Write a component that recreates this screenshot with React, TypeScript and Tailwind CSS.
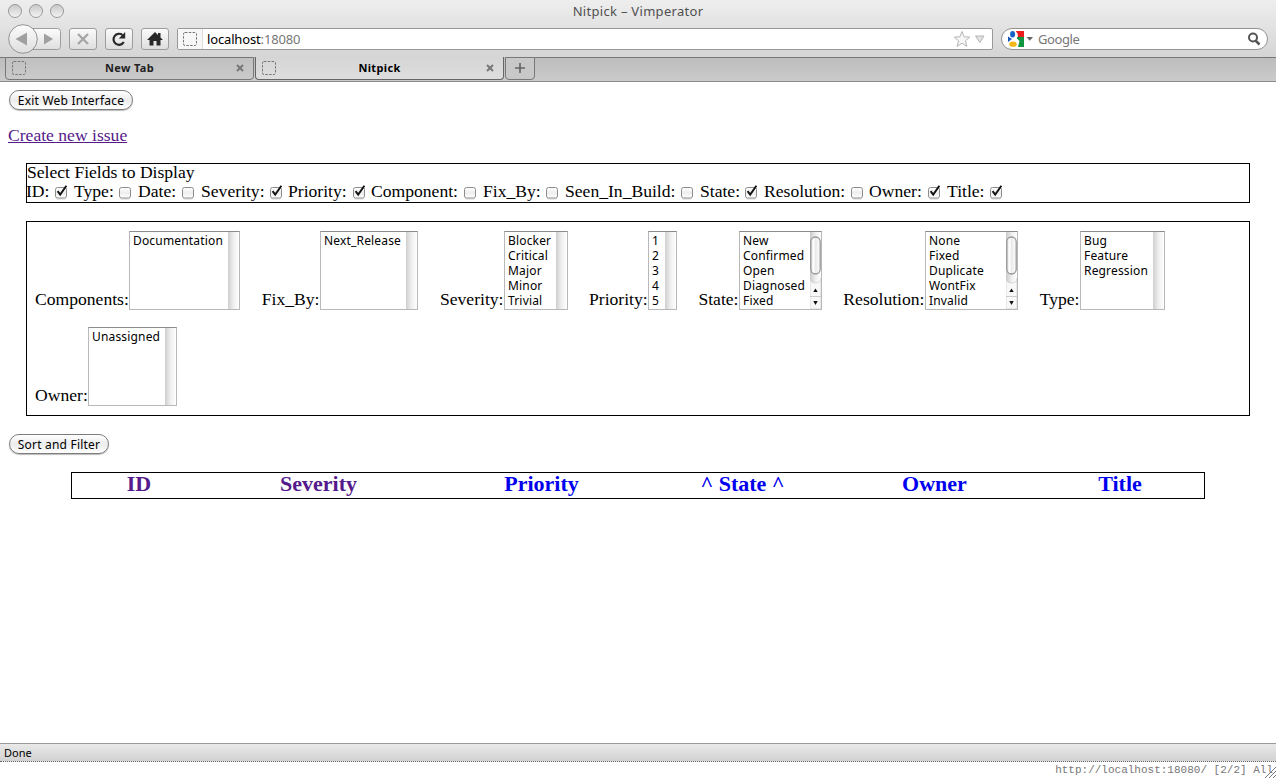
import React from "react";

const sans = "font-['Noto_Sans','Open_Sans',sans-serif]";

const fields = [
  { name: "ID:", item: "w-[48px]", label: "w-[29px]", on: true },
  { name: "Type:", item: "w-[64px]", label: "w-[45px]", on: false },
  { name: "Date:", item: "w-[63px]", label: "w-[44px]", on: false },
  { name: "Severity:", item: "w-[87px]", label: "w-[69px]", on: true },
  { name: "Priority:", item: "w-[83px]", label: "w-[65px]", on: true },
  { name: "Component:", item: "w-[112px]", label: "w-[93px]", on: false },
  { name: "Fix_By:", item: "w-[82px]", label: "w-[63px]", on: false },
  { name: "Seen_In_Build:", item: "w-[135px]", label: "w-[116px]", on: false },
  { name: "State:", item: "w-[64px]", label: "w-[45px]", on: true },
  { name: "Resolution:", item: "w-[105px]", label: "w-[87px]", on: false },
  { name: "Owner:", item: "w-[78px]", label: "w-[59px]", on: true },
  { name: "Title:", item: "w-[60px]", label: "w-[43px]", on: true },
];

const filters = [
  { name: "Components:", label: "w-[94px]", list: "w-[111px]", options: ["Documentation"] },
  { name: "Fix_By:", label: "w-[59px]", list: "w-[98px]", options: ["Next_Release"] },
  { name: "Severity:", label: "w-[65px]", list: "w-[64px]", options: ["Blocker", "Critical", "Major", "Minor", "Trivial"] },
  { name: "Priority:", label: "w-[59px]", list: "w-[29px]", options: ["1", "2", "3", "4", "5"] },
  { name: "State:", label: "w-[41px]", list: "w-[83px]", options: ["New", "Confirmed", "Open", "Diagnosed", "Fixed"], scroll: true },
  { name: "Resolution:", label: "w-[82px]", list: "w-[93px]", options: ["None", "Fixed", "Duplicate", "WontFix", "Invalid"], scroll: true },
  { name: "Type:", label: "w-[41px]", list: "w-[85px]", options: ["Bug", "Feature", "Regression"] },
  { name: "Owner:", label: "w-[53px]", list: "w-[89px]", options: ["Unassigned"] },
];

const columns = [
  { name: "ID", width: "w-[134px]", color: "text-[#551a8b]" },
  { name: "Severity", width: "w-[225px]", color: "text-[#551a8b]" },
  { name: "Priority", width: "w-[221px]", color: "text-[#0000ee]" },
  { name: "^ State ^", width: "w-[181px]", color: "text-[#0000ee]" },
  { name: "Owner", width: "w-[203px]", color: "text-[#0000ee]" },
  { name: "Title", width: "w-[168px]", color: "text-[#0000ee]" },
];

function Checkbox({ on }: { on: boolean }) {
  return (
    <svg className="mt-[3px] shrink-0" width="14" height="15" viewBox="0 0 14 15">
      <defs>
        <linearGradient id="box" x1="0" y1="0" x2="0" y2="1">
          <stop offset="0" stopColor="#fff" />
          <stop offset="0.5" stopColor="#eee" />
          <stop offset="1" stopColor="#fff" />
        </linearGradient>
      </defs>
      <rect x="0.5" y="2.5" width="11" height="10.500" rx="2" fill="url(#box)" stroke="#8c8c8c" />
      <path d="M1.5 13.9h9" stroke="#b5b5b5" strokeWidth="0.7" />
      {on && <path d="M2.6 6.2 5.2 9.6 11.4 0.8" fill="none" stroke="#111" strokeWidth="1.9" />}
    </svg>
  );
}

function ScrollBar({ active }: { active?: boolean }) {
  if (!active) {
    return <div className="w-[11px] shrink-0 bg-linear-to-r from-[#cfcfcf] via-[#efefef] to-white" />;
  }
  return (
    <svg className="shrink-0" width="11" height="77" viewBox="0 0 11 77">
      <defs>
        <linearGradient id="track">
          <stop offset="0" stopColor="#c9c9c9" />
          <stop offset="0.5" stopColor="#eee" />
          <stop offset="1" stopColor="#fff" />
        </linearGradient>
        <linearGradient id="thumb">
          <stop offset="0" stopColor="#ddd" />
          <stop offset="0.3" stopColor="#fff" />
          <stop offset="0.5" stopColor="#eaeaea" />
          <stop offset="1" stopColor="#fff" />
        </linearGradient>
      </defs>
      <rect width="11" height="77" fill="url(#track)" />
      <path d="M0 46Q0 51 5.500 51T11 46V77H0Z" fill="#f8f8f8" stroke="#ccc" strokeWidth="0.7" />
      <rect x="0.800" y="5" width="9.400" height="37" rx="4.700" fill="url(#thumb)" stroke="#979797" strokeWidth="1.3" />
      <path d="M0 64.500h11" stroke="#ccc" />
      <path d="M3.300 60 5.500 56.500 7.700 60Z M3.300 69 5.500 73 7.700 69Z" fill="#111" />
    </svg>
  );
}

function PushButton({ children, width }: { children: React.ReactNode; width: string }) {
  return (
    <button
      className={`${sans} ${width} block h-[20px] whitespace-nowrap rounded-full border border-[#7d7d7d] bg-linear-to-b from-white via-[#ececec] to-white pt-px text-center text-[12px] leading-[16px] tracking-[0.2px] text-black shadow-[0_1px_1px_#bbb]`}
    >
      {children}
    </button>
  );
}

function PagePlaceholder() {
  return (
    <svg className="shrink-0" width="14" height="14" viewBox="0 0 14 14">
      <rect x="0.5" y="0.5" width="13" height="13" rx="1.500" fill="none" stroke="#777" strokeDasharray="2.500 1.300" />
    </svg>
  );
}

function CloseMark() {
  return (
    <svg className="shrink-0" width="8" height="8" viewBox="0 0 8 8">
      <path d="M1 1 7 7M7 1 1 7" stroke="#777" strokeWidth="2" />
    </svg>
  );
}

const toolButton =
  "flex h-[22px] w-[28px] shrink-0 items-center justify-center rounded-[3px] border border-[#9d9d9d] bg-linear-to-b from-[#fbfbfb] to-[#dedede]";

function BrowserHeader() {
  return (
    <header className={`${sans} h-[82px] w-full`}>
      <div className="h-[57px] bg-linear-to-b from-[#eeeeee] to-[#d5d5d5]">
        <div className="grid h-[24px] grid-cols-[1fr_auto_1fr] items-center">
          <div className="flex gap-[7px] pl-[8px]">
            {[0, 1, 2].map((n) => (
              <i
                key={n}
                className="mt-[-2px] size-[14px] rounded-full border border-[#999] bg-linear-to-b from-[#c9c9c9] to-[#f3f3f3]"
              />
            ))}
          </div>
          <div className="pb-[2px] text-[13px] leading-[22px] tracking-[0.3px] text-[#505050]">Nitpick – Vimperator</div>
        </div>
        <div className="flex h-[30px] items-center pl-[8px]">
          <svg className="shrink-0" width="53" height="30" viewBox="0 0 53 30">
            <defs>
              <linearGradient id="nav" x1="0" y1="0" x2="0" y2="1">
                <stop offset="0" stopColor="#fcfcfc" />
                <stop offset="1" stopColor="#dedede" />
              </linearGradient>
            </defs>
            <rect x="20" y="4.500" width="32.500" height="21" rx="3" fill="url(#nav)" stroke="#9d9d9d" />
            <circle cx="15" cy="15" r="14.300" fill="url(#nav)" stroke="#939393" />
            <path d="M7.500 15 19 8.500V21.500Z M36 9.500V20.500L45 15Z" fill="#a0a0a0" />
          </svg>
          <div className={`${toolButton} ml-[8px]`}>
            <svg width="14" height="14" viewBox="0 0 14 14">
              <path d="M2 2 12 12M12 2 2 12" stroke="#a5a5a5" strokeWidth="2.300" />
            </svg>
          </div>
          <div className={`${toolButton} ml-[8px]`}>
            <svg width="16" height="16" viewBox="0 0 16 16">
              <path d="M12.800 11A5.500 5.500 0 1 1 11.500 4" fill="none" stroke="#292929" strokeWidth="2.200" />
              <path d="M14.200 1V7.500H7.800Z" fill="#292929" />
            </svg>
          </div>
          <div className={`${toolButton} ml-[8px]`}>
            <svg width="16" height="16" viewBox="0 0 16 16">
              <path d="M8 1 11 4V2h2.500v4.500L16 9H13.500V14.500H9.500V10H6.500V14.500H2.500V9H0Z" fill="#292929" />
            </svg>
          </div>
          <div className="ml-[8px] flex h-[22px] w-[816px] items-center rounded-[2px] border border-[#999] bg-white">
            <div className="flex h-full w-[25px] items-center justify-center border-r border-[#ddd] bg-[#f7f7f7]">
              <PagePlaceholder />
            </div>
            <div className="flex-1 pl-[4px] text-[13px] leading-[20px] tracking-[-0.15px] text-black">
              localhost<span className="text-[#777]">:18080</span>
            </div>
            <svg width="34" height="18" viewBox="0 0 34 18">
              <path
                d="M8 1.500 10.100 6.800 15.800 7.100 11.400 10.800 12.900 16.400 8 13.200 3.100 16.400 4.600 10.800 0.200 7.100 5.900 6.800Z"
                fill="#f6f6f6"
                stroke="#b5b5b5"
              />
              <path d="M21.500 6h8.500L25.800 12.500Z" fill="#e2e2e2" stroke="#b5b5b5" />
            </svg>
            <div className="w-[4px]" />
          </div>
          <div className="ml-[8px] flex h-[22px] w-[267px] items-center rounded-full border border-[#939393] bg-white pl-[6px] pr-[6px]">
            <svg width="26" height="16" viewBox="0 0 26 16">
              <path d="M8 0H16V6H10Z" fill="#ee1c1c" />
              <path d="M9 6H16V16H9Z" fill="#109540" />
              <path d="M0 5.500 4 8 0 11Z" fill="#1753b5" />
              <path d="M7 0 10 3 8.500 7 11.500 10 10 16H5L2 11 6 9 3 4Z" fill="#fff" />
              <ellipse cx="4.600" cy="3.300" rx="2.500" ry="3.200" fill="#1664c7" />
              <ellipse cx="5" cy="13.200" rx="3.700" ry="2.600" fill="#f5b619" />
              <path d="M18.500 6h6.500L21.800 9.800Z" fill="#666" />
            </svg>
            <div className="flex-1 pl-[4px] text-[13px] leading-[20px] tracking-[-0.4px] text-[#777]">Google</div>
            <svg width="14" height="14" viewBox="0 0 14 14">
              <circle cx="6" cy="5.500" r="4" fill="none" stroke="#555" strokeWidth="2" />
              <path d="M8.500 8.500 12.500 12.500" stroke="#555" strokeWidth="2.500" />
            </svg>
          </div>
        </div>
      </div>
      <div className="flex h-[25px] border-b border-[#8b8b8b] bg-linear-to-b from-[#bcbcbc] to-[#cbcbcb] text-[11px] font-bold leading-[20px] tracking-[0.35px]">
        <div className="w-[5px] border-t border-[#777]" />
        <div className="flex h-[23px] w-[249px] items-center rounded-b-[4px] border border-[#777] bg-linear-to-b from-[#c0c0c0] to-[#cacaca] pb-[2px] pl-[6px] pr-[9px]">
          <PagePlaceholder />
          <span className="flex-1 pr-[3px] text-center text-[#222]">New Tab</span>
          <CloseMark />
        </div>
        <div className="ml-px flex h-[23px] w-[249px] items-center rounded-b-[4px] border border-t-0 border-[#666] bg-linear-to-b from-[#d5d5d5] to-[#dedede] pl-[6px] pr-[9px]">
          <PagePlaceholder />
          <span className="flex-1 pb-[1px] pr-[3px] text-center text-black">Nitpick</span>
          <CloseMark />
        </div>
        <div className="ml-px flex h-[23px] w-[30px] items-center justify-center rounded-b-[4px] border border-[#777] bg-[#c8c8c8] pb-[2px]">
          <svg width="12" height="12" viewBox="0 0 12 12">
            <path d="M6 1V11M1 6H11" stroke="#666" strokeWidth="1.700" />
          </svg>
        </div>
        <div className="flex-1 border-t border-[#777]" />
      </div>
    </header>
  );
}

export default function App() {
  return (
    <div className="flex h-[778px] w-[1276px] flex-col overflow-hidden bg-white font-['Liberation_Serif',serif] text-[17.6px] leading-[19px] text-black">
      <BrowserHeader />
      <main className="flex-1 pt-[8px]">
        <div className="pl-[9px]">
          <PushButton width="w-[124px]">Exit Web Interface</PushButton>
        </div>
        <a href="#new" className="ml-[8px] mt-[16px] block w-max text-[#551a8b] underline">
          Create new issue
        </a>
        <section className="mx-[26px] mt-[18px] h-[40px] border border-black">
          <div className="-mt-px">
            <div>Select Fields to Display</div>
            <div className="-ml-px flex">
              {fields.map((f) => (
                <label key={f.name} className={`flex shrink-0 whitespace-nowrap ${f.item}`}>
                  <span className={`shrink-0 ${f.label}`}>{f.name}</span>
                  <Checkbox on={f.on} />
                </label>
              ))}
            </div>
          </div>
        </section>
        <section className="mx-[26px] mt-[18px] flex h-[195px] flex-wrap content-start gap-x-[21px] gap-y-[17px] border border-black pl-[8px] pt-[9px]">
          {filters.map((f) => (
            <div key={f.name} className="flex h-[79px] items-end">
              <span className={`${f.label} whitespace-nowrap pb-[1px] pr-[0.5px] text-right`}>{f.name}</span>
              <div className={`${f.list} flex h-[79px] border border-[#b8b8b8] border-t-[#8c8c8c]`}>
                <ul className={`${sans} min-w-0 flex-1 whitespace-nowrap pl-[3px] pt-[1px] text-[12px] leading-[15px] tracking-[0.17px]`}>
                  {f.options.map((o) => (
                    <li key={o}>{o}</li>
                  ))}
                </ul>
                <ScrollBar active={f.scroll} />
              </div>
            </div>
          ))}
        </section>
        <div className="mt-[18px] pl-[9px]">
          <PushButton width="w-[100px]">Sort and Filter</PushButton>
        </div>
        <div className="ml-[71px] mt-[18px] flex h-[27px] w-[1134px] border border-black text-center text-[22px] font-bold leading-[22px]">
          {columns.map((c) => (
            <div key={c.name} className={`${c.width} ${c.color}`}>
              {c.name}
            </div>
          ))}
        </div>
      </main>
      <footer className="h-[35px] shrink-0">
        <div className={`${sans} h-[19px] border-b border-t border-dotted border-b-[#666] border-t-[#999] bg-linear-to-b from-[#e9e9e9] to-[#d2d2d2] pl-[4px] text-[11px] leading-[17px] [border-top-style:solid]`}>
          Done
        </div>
        <div className="relative pr-[3px] text-right font-['Liberation_Mono',monospace] text-[11px] leading-[16px] text-[#777]">
          http://localhost:18080/ [2/2] All
          <svg className="absolute bottom-0 right-0" width="12" height="12" viewBox="0 0 12 12">
            <path d="M1 12 12 1M5 12 12 5M9 12 12 9" stroke="#777" />
          </svg>
        </div>
      </footer>
    </div>
  );
}
